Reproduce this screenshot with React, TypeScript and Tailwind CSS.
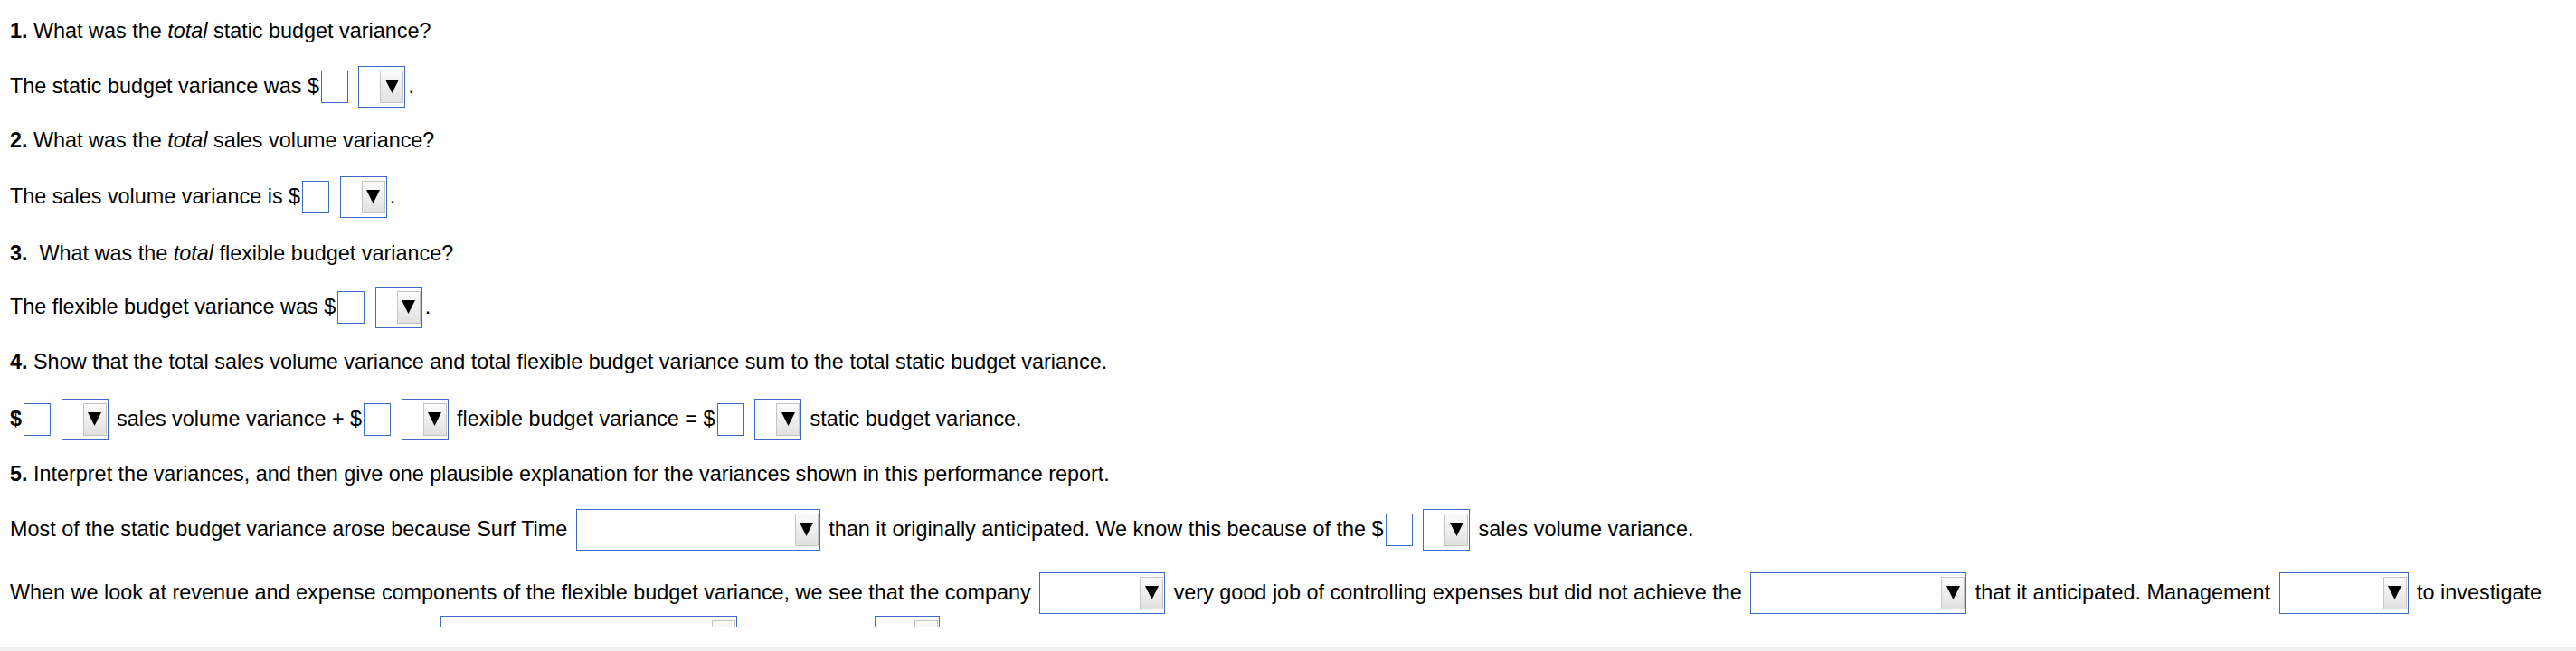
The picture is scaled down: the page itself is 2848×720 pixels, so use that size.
import React from "react";

function Input() {
  return <span className="mx-[2px] inline-block h-[36px] w-[30px] shrink-0 border border-[#3d6bc8] bg-white" />;
}

function Select({ w }: { w: string }) {
  return (
    <span className={`mx-[3px] flex h-[46px] shrink-0 items-center justify-end border border-[#3d6bc8] bg-white pr-[1px] ${w}`}>
      <span className="flex h-[36px] w-[26px] items-center justify-center border border-[#c4c4c4] bg-linear-to-b from-[#fbfbfb] to-[#e1e1e1] pb-[2px]">
        <svg width="15" height="15" viewBox="0 0 15 15">
          <polygon points="0,0 15,0 7.5,15" fill="#000" />
        </svg>
      </span>
    </span>
  );
}

function T({ children }: { children: React.ReactNode }) {
  return <span className="whitespace-pre">{children}</span>;
}

function Row({ children, mt }: { children: React.ReactNode; mt: string }) {
  return <div className={`flex h-[46px] shrink-0 items-center whitespace-pre ${mt}`}>{children}</div>;
}

export default function App() {
  return (
    <div className="flex h-[720px] w-[2848px] flex-col overflow-hidden bg-white font-['Liberation_Sans',Arial,sans-serif] text-[23.4px] leading-none text-black">
      <div className="flex h-[694px] shrink-0 flex-col overflow-hidden pl-[11px] pt-[12px]">
        <Row mt="mt-0">
          <T><b>1.</b> What was the <i>total</i> static budget variance?</T>
        </Row>
        <Row mt="mt-[15px]">
          <T>The static budget variance was $</T>
          <Input />
          <T> </T>
          <Select w="w-[52px]" />
          <T>.</T>
        </Row>
        <Row mt="mt-[14px]">
          <T><b>2.</b> What was the <i>total</i> sales volume variance?</T>
        </Row>
        <Row mt="mt-[16px]">
          <T>The sales volume variance is $</T>
          <Input />
          <T> </T>
          <Select w="w-[52px]" />
          <T>.</T>
        </Row>
        <Row mt="mt-[17px]">
          <T><b>3.</b>{"  "}What was the <i>total</i> flexible budget variance?</T>
        </Row>
        <Row mt="mt-[13px]">
          <T>The flexible budget variance was $</T>
          <Input />
          <T> </T>
          <Select w="w-[52px]" />
          <T>.</T>
        </Row>
        <Row mt="mt-[15px]">
          <T><b>4.</b> Show that the total sales volume variance and total flexible budget variance sum to the total static budget variance.</T>
        </Row>
        <Row mt="mt-[17px]">
          <T><b>$</b></T>
          <Input />
          <T> </T>
          <Select w="w-[52px]" />
          <T> sales volume variance + $</T>
          <Input />
          <T> </T>
          <Select w="w-[52px]" />
          <T> flexible budget variance = $</T>
          <Input />
          <T> </T>
          <Select w="w-[52px]" />
          <T> static budget variance.</T>
        </Row>
        <Row mt="mt-[15px]">
          <T><b>5.</b> Interpret the variances, and then give one plausible explanation for the variances shown in this performance report.</T>
        </Row>
        <Row mt="mt-[15px]">
          <T>Most of the static budget variance arose because Surf Time </T>
          <Select w="w-[270px]" />
          <T> than it originally anticipated. We know this because of the $</T>
          <Input />
          <T> </T>
          <Select w="w-[52px]" />
          <T> sales volume variance.</T>
        </Row>
        <Row mt="mt-[24px]">
          <T>When we look at revenue and expense components of the flexible budget variance, we see that the company </T>
          <Select w="w-[139px]" />
          <T> very good job of controlling expenses but did not achieve the </T>
          <Select w="w-[239px]" />
          <T> that it anticipated. Management </T>
          <Select w="w-[143px]" />
          <T> to investigate</T>
        </Row>
        <Row mt="mt-[2px]">
          <T>why actual results differed from the budgeted </T>
          <Select w="w-[328px]" />
          <T> and it should </T>
          <Select w="w-[72px]" />
          <T> more attention is needed.</T>
        </Row>
      </div>
      <div className="h-[22px] shrink-0 bg-white" />
      <div className="h-[4px] shrink-0 bg-[#f1f1f1]" />
    </div>
  );
}
